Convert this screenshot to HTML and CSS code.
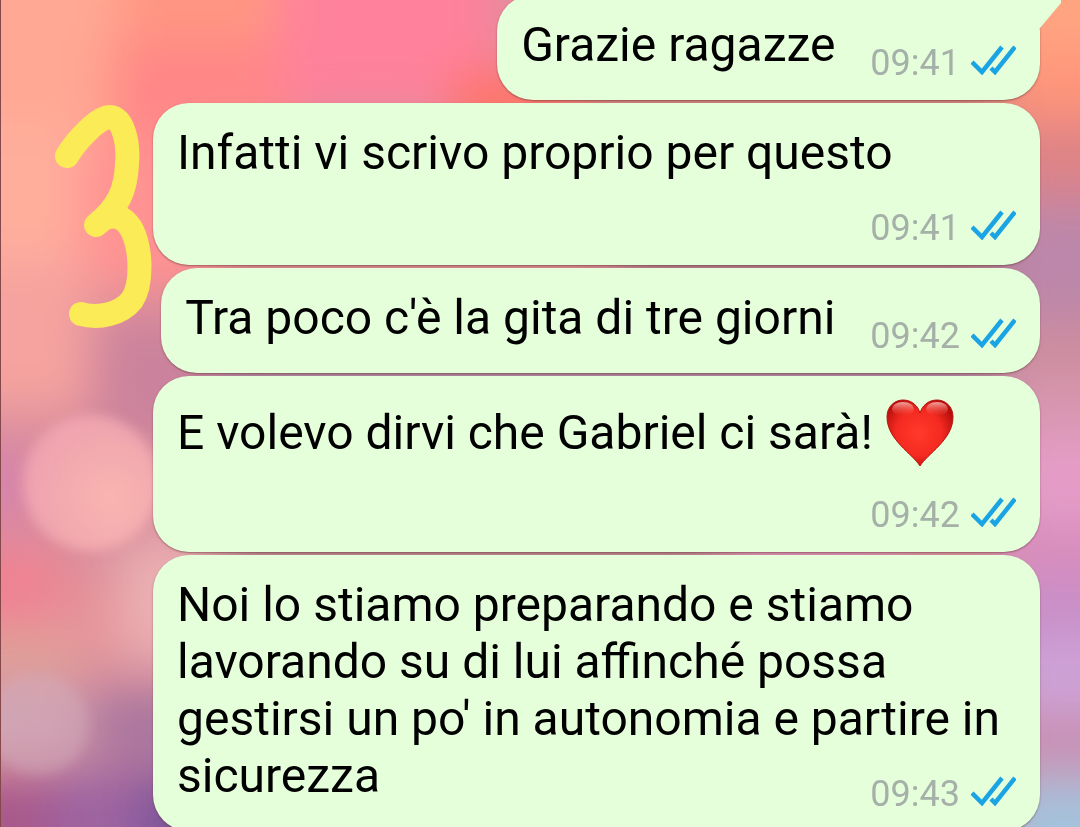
FILE: index.html
```html
<!DOCTYPE html>
<html lang="it">
<head>
    <meta charset="UTF-8">
    <meta name="viewport" content="width=device-width, initial-scale=1.0">
    <title>Chat</title>
    <link rel="stylesheet" href="styles.css">
</head>
<body>
    <svg class="wallpaper" viewBox="0 0 1080 827" preserveAspectRatio="none" aria-hidden="true">
        <defs>
            <filter id="soft" x="-50%" y="-50%" width="200%" height="200%"><feGaussianBlur stdDeviation="24"/></filter>
            <filter id="edge" x="-20%" y="-20%" width="140%" height="140%"><feGaussianBlur stdDeviation="6"/></filter>
            <radialGradient id="bokeh" cx=".65" cy=".6" r=".75">
                <stop offset="0" stop-color="#ffbcb4"/>
                <stop offset="1" stop-color="#efa2b2"/>
            </radialGradient>
        </defs>
        <rect width="1080" height="827" fill="#d98f9c"/>
        <g filter="url(#soft)">
            <rect x="-80" y="-80" width="220" height="230" fill="#ffa893"/>
            <rect x="120" y="-80" width="170" height="120" fill="#ff9682"/>
            <rect x="110" y="40" width="190" height="100" fill="#ff8787"/>
            <rect x="280" y="-80" width="220" height="190" fill="#ff819c"/>
            <rect x="450" y="70" width="130" height="70" fill="#ff7468"/>
            <rect x="580" y="70" width="440" height="70" fill="#d08078"/>
            <rect x="1000" y="-80" width="160" height="140" fill="#ffa481"/>
            <rect x="1000" y="50" width="160" height="70" fill="#ff957a"/>
            <rect x="-80" y="120" width="160" height="150" fill="#ffae9c"/>
            <rect x="80" y="140" width="140" height="150" fill="#ff9292"/>
            <rect x="-80" y="260" width="170" height="150" fill="#f6a39f"/>
            <rect x="90" y="320" width="160" height="120" fill="#cb829c"/>
            <rect x="220" y="240" width="400" height="60" fill="#d8868a"/>
            <rect x="620" y="240" width="380" height="60" fill="#a87682"/>
            <rect x="220" y="350" width="780" height="50" fill="#a0809c"/>
            <rect x="220" y="530" width="500" height="50" fill="#b08088"/>
            <rect x="730" y="530" width="170" height="50" fill="#dc8fb8"/>
            <rect x="1000" y="120" width="160" height="80" fill="#dd8386"/>
            <rect x="1000" y="200" width="160" height="120" fill="#bc87aa"/>
            <rect x="1000" y="320" width="160" height="60" fill="#cd8d9e"/>
            <rect x="1000" y="380" width="160" height="60" fill="#d897b0"/>
            <rect x="1000" y="440" width="160" height="80" fill="#e59dc8"/>
            <rect x="1000" y="520" width="160" height="60" fill="#d88dbd"/>
            <rect x="1000" y="580" width="160" height="60" fill="#c78fc8"/>
            <rect x="1000" y="640" width="160" height="70" fill="#cea3d8"/>
            <rect x="1000" y="710" width="160" height="70" fill="#c891b4"/>
            <rect x="1000" y="780" width="160" height="120" fill="#a4c2dc"/>
            <rect x="-80" y="445" width="110" height="80" fill="#d783ac"/>
            <rect x="-80" y="545" width="140" height="80" fill="#f08293"/>
            <rect x="60" y="580" width="70" height="80" fill="#e5929a"/>
            <rect x="120" y="540" width="100" height="120" fill="#ebb0b3"/>
            <rect x="-80" y="630" width="160" height="50" fill="#e0a197"/>
            <rect x="-80" y="690" width="160" height="60" fill="#cfa0b2"/>
            <rect x="90" y="690" width="120" height="70" fill="#a9769f"/>
            <rect x="-80" y="775" width="130" height="110" fill="#a8588a"/>
            <rect x="50" y="770" width="90" height="110" fill="#9d64a1"/>
            <rect x="140" y="770" width="120" height="110" fill="#7c559a"/>
        </g>
        <g filter="url(#edge)">
            <circle cx="91" cy="483" r="68" fill="url(#bokeh)" opacity=".85"/>
            <circle cx="38" cy="724" r="50" fill="#d0abba" opacity=".45"/>
        </g>
        <rect width="1" height="827" fill="#84484a"/>
    </svg>

    <!-- handwritten number over the wallpaper -->
    <svg class="doodle" viewBox="0 0 100 230" role="img" aria-label="3">
        <path d="M13 54 C22 39 44 15 56 15 C68 15 75 38 73 62 C72 88 64 106 42 123 C55 110 69 112 78 128 C88 149 88 183 78 198 C67 212 45 217 27 212"/>
    </svg>

    <svg class="symbols" aria-hidden="true">
        <symbol id="ticks" viewBox="0 0 45 30">
            <path d="M1 17 L11 27 L31 2 M20 23 L24 27 L44 2" fill="none" stroke="#1ba4e4" stroke-width="4.5"/>
        </symbol>
    </svg>

    <main class="messages">
        <article class="bubble tail">
            <p class="text">Grazie ragazze</p>
            <div class="meta"><time>09:41</time><svg class="ticks" role="img" aria-label="Letto"><use href="#ticks"/></svg></div>
        </article>
        <article class="bubble stacked">
            <p class="text">Infatti vi scrivo proprio per questo</p>
            <div class="meta"><time>09:41</time><svg class="ticks" role="img" aria-label="Letto"><use href="#ticks"/></svg></div>
        </article>
        <article class="bubble">
            <p class="text">Tra poco c'è la gita di tre giorni</p>
            <div class="meta"><time>09:42</time><svg class="ticks" role="img" aria-label="Letto"><use href="#ticks"/></svg></div>
        </article>
        <article class="bubble stacked">
            <p class="text">E volevo dirvi che Gabriel ci sarà! <svg class="heart" viewBox="0 0 70 71" role="img" aria-label="Cuore rosso">
                <defs>
                    <radialGradient id="red" cx=".48" cy=".5" r=".58">
                        <stop offset="0" stop-color="#ff3a2b"/>
                        <stop offset=".6" stop-color="#f42a20"/>
                        <stop offset="1" stop-color="#b50d0c"/>
                    </radialGradient>
                    <linearGradient id="shine" x2="0" y2="1">
                        <stop offset="0" stop-color="#ffc9c0" stop-opacity=".8"/>
                        <stop offset="1" stop-color="#ff5a4a" stop-opacity="0"/>
                    </linearGradient>
                </defs>
                <path d="M35 69 C28 57 2 43 2 20 C2 9 10 3 18 3 C27 3 33 9 35 16 C37 9 43 3 52 3 C60 3 68 9 68 20 C68 43 42 57 35 69 Z" fill="url(#red)" stroke="#b81310" stroke-width="1"/>
                <ellipse cx="18" cy="12" rx="11" ry="7" fill="url(#shine)"/>
                <ellipse cx="52" cy="12" rx="11" ry="7" fill="url(#shine)"/>
            </svg></p>
            <div class="meta"><time>09:42</time><svg class="ticks" role="img" aria-label="Letto"><use href="#ticks"/></svg></div>
        </article>
        <article class="bubble long">
            <p class="text">Noi lo stiamo preparando e stiamo lavorando su di lui affinché possa gestirsi un po' in autonomia e partire in sicurezza <span class="meta"><time>09:43</time><svg class="ticks" role="img" aria-label="Letto"><use href="#ticks"/></svg></span></p>
        </article>
    </main>
</body>
</html>
```
FILE: styles.css
```css
* {
    box-sizing: border-box;
}
body {
    margin: 0;
    height: 100vh;
    overflow: hidden;
    font-family: Roboto, "Liberation Sans", sans-serif;
    background-color: #d98f9c;
    color: #000;
}
.wallpaper {
    position: fixed;
    inset: 0;
    width: 100%;
    height: 100%;
}
.symbols {
    position: absolute;
    width: 0;
    height: 0;
}
.doodle {
    position: absolute;
    left: 54px;
    top: 102px;
    width: 100px;
    height: 230px;
    z-index: 2;
}
.doodle path {
    fill: none;
    stroke: #faeb57;
    stroke-width: 24px;
    stroke-linecap: round;
    stroke-linejoin: round;
}
.messages {
    position: relative;
    display: flex;
    flex-direction: column;
    align-items: flex-end;
    gap: 3px;
    margin-top: -5px;
    padding: 0 40px 0 153px;
}
.bubble {
    position: relative;
    display: flex;
    justify-content: flex-end;
    align-items: flex-end;
    column-gap: 35px;
    max-width: 100%;
    padding: 21px 24px 16px;
    border-radius: 36px;
    background-color: #e5ffdb;
    box-shadow: 0 1px 2px rgba(80, 40, 40, 0.5);
}
.bubble.stacked {
    width: 100%;
    flex-direction: column;
    gap: 15px;
}
.stacked .text {
    align-self: flex-start;
}
.bubble.tail::after {
    content: "";
    position: absolute;
    left: calc(100% - 40px);
    top: 0;
    width: 61px;
    height: 33px;
    background-color: #e5ffdb;
    clip-path: polygon(0 0, 100% 0, 100% 8px, 40px 100%, 0 100%);
}
.text {
    margin: 0;
    padding-bottom: 11px;
    font-size: 48px;
    line-height: 57px;
}
.heart {
    width: 70px;
    height: 71px;
    vertical-align: -19px;
}
.meta {
    display: flex;
    align-items: center;
    gap: 11px;
    font-size: 36px;
    line-height: 42px;
    color: #a5b0a8;
}
.ticks {
    width: 45px;
    height: 30px;
    margin-bottom: 6px;
}
/* the time shares the last line of a long message */
.long .text {
    display: flow-root;
    padding-bottom: 0;
}
.long .meta {
    float: right;
    margin-top: 26px;
}
```
